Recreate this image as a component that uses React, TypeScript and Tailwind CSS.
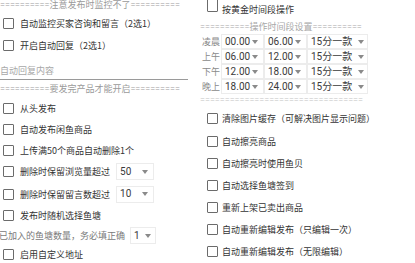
import React from "react";

const Box = () => (
  <span className="block w-[11px] h-[11px] border-[1.5px] border-[#6b6b6b] rounded-[1px] shrink-0" />
);

const Arrow = () => (
  <svg width="6" height="4" viewBox="0 0 6 4" className="shrink-0">
    <path d="M0 0 L6 0 L3 4 Z" fill="#8a8a8a" />
  </svg>
);

const Row = ({ label, h, children }: { label: string; h: string; children?: React.ReactNode }) => (
  <div className={`flex items-center ${h}`}>
    <div className="pl-[3px] pr-[6px]">
      <Box />
    </div>
    <span className="text-[9px] text-[#333] whitespace-nowrap leading-none [text-spacing-trim:space-all]">{label}</span>
    {children}
  </div>
);

const Spin = ({ v, w, pr }: { v: string; w: string; pr?: string }) => (
  <div className={`flex items-center justify-between ${w} h-full border border-[#ececec] pl-[3px] ${pr ?? "pr-[5px]"}`}>
    <span className="text-[10px] text-[#3a3a3a] leading-none font-['Roboto','Noto_Sans_CJK_SC',sans-serif]">{v}</span>
    <Arrow />
  </div>
);

const TimeRow = ({ label, a, b }: { label: string; a: string; b: string }) => (
  <div className="flex items-stretch h-[15px]">
    <span className="w-[21px] pl-[2px] text-[9px] text-[#8a8a8a] leading-none flex items-center whitespace-nowrap">{label}</span>
    <Spin v={a} w="w-[43px]" />
    <Spin v={b} w="w-[43px]" />
    <Spin v="15分一款" w="w-[61px]" pr="pr-[3px]" />
  </div>
);

const hdr = "font-['Roboto','Noto_Sans_CJK_SC',sans-serif] text-[9px] leading-none whitespace-nowrap [text-spacing-trim:space-all]";

export default function App() {
  const eq = "==========";
  return (
    <div className="w-[415px] h-[263px] overflow-hidden bg-white font-['Noto_Sans_CJK_SC','Noto_Sans',sans-serif] flex">
      <div className="w-[200px] shrink-0 flex flex-col">
        <div className={`h-[12px] flex items-center text-[#9a9a9a] ${hdr}`}>
          {eq}注意发布时监控不了{eq}
        </div>
        <Row label="自动监控买家咨询和留言（2选1）" h="h-[23px]" />
        <Row label="开启自动回复（2选1）" h="h-[23px]" />
        <div className="w-[188px] h-[23px] border-b border-[#9a9a9a] flex items-end pb-[4px]">
          <span className="text-[9px] text-[#a8a8a8] leading-none">自动回复内容</span>
        </div>
        <div className={`h-[19px] flex items-center text-[#9a9a9a] ${hdr}`}>
          {eq}要发完产品才能开启{eq}
        </div>
        <Row label="从头发布" h="h-[21px]" />
        <Row label="自动发布闲鱼商品" h="h-[21px]" />
        <Row label="上传满50个商品自动删除1个" h="h-[21px]" />
        <div className="h-[23px] flex items-center">
          <Row label="删除时保留浏览量超过" h="h-full" />
          <div className="h-[17px] ml-[6px] flex">
            <Spin v="50" w="w-[38px]" />
          </div>
        </div>
        <div className="h-[22px] flex items-center">
          <Row label="删除时保留留言数超过" h="h-full" />
          <div className="h-[17px] ml-[6px] flex">
            <Spin v="10" w="w-[38px]" pr="pr-[5px]" />
          </div>
        </div>
        <Row label="发布时随机选择鱼塘" h="h-[21px]" />
        <div className="h-[21px] flex items-center -ml-[1px]">
          <span className="text-[9px] text-[#7a7a7a] leading-none whitespace-nowrap [text-spacing-trim:space-all]">已加入的鱼塘数量，务必填正确</span>
          <div className="h-[17px] ml-[5px] flex">
            <Spin v="1" w="w-[26px]" pr="pr-[4px]" />
          </div>
        </div>
        <Row label="启用自定义地址" h="h-[17px]" />
      </div>
      <div className="flex-1 flex flex-col -mt-[2px]">
        <div className="h-[22px] flex items-center pl-[7px]">
          <span className="block self-start w-[11px] h-[14px] border-[1.5px] border-[#6b6b6b] rounded-[1px] shrink-0" />
          <span className="ml-[4px] text-[9px] text-[#333] leading-none">按黄金时间段操作</span>
        </div>
        <div className={`h-[14px] flex items-center text-[#a8a8a8] ${hdr}`}>
          ==========操作时间段设置==========
        </div>
        <TimeRow label="凌晨" a="00.00" b="06.00" />
        <TimeRow label="上午" a="06.00" b="12.00" />
        <TimeRow label="下午" a="12.00" b="18.00" />
        <TimeRow label="晚上" a="18.00" b="24.00" />
        <div className={`h-[13px] flex items-center text-[#c4c4c4] ${hdr}`}>
          =================================
        </div>
        {[
          "清除图片缓存（可解决图片显示问题）",
          "自动擦亮商品",
          "自动擦亮时使用鱼贝",
          "自动选择鱼塘签到",
          "重新上架已卖出商品",
          "自动重新编辑发布（只编辑一次）",
          "自动重新编辑发布（无限编辑）",
        ].map((t, i) => (
          <div key={t} className={`${i === 0 ? "h-[23px]" : "h-[22px]"} flex items-center pl-[7px] shrink-0`}>
            <Box />
            <span className="ml-[4px] text-[9px] text-[#333] leading-none whitespace-nowrap [text-spacing-trim:space-all]">{t}</span>
          </div>
        ))}
      </div>
    </div>
  );
}
